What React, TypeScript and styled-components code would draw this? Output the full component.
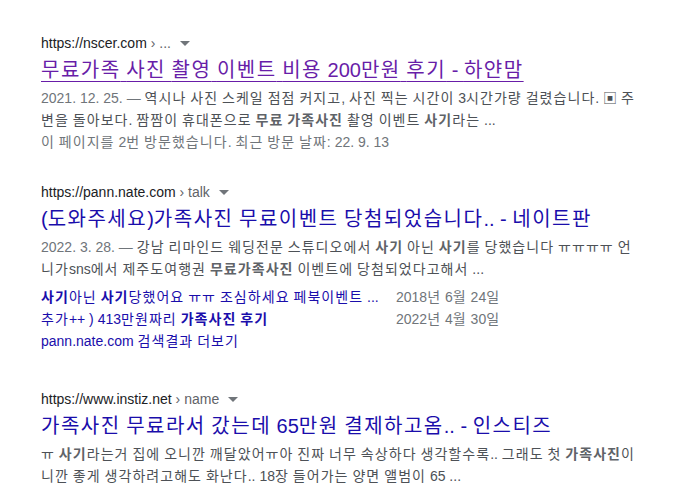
import { Fragment } from "react";
import styled, { createGlobalStyle } from "styled-components";

const GlobalStyle = createGlobalStyle`
  body {
    margin: 0;
    background: #fff;
    font-family: "Liberation Sans", Arial, "Noto Sans CJK KR", sans-serif;
  }
`;

// Hangul in the reference is set a little wider than Noto Sans CJK KR
const Hangul = styled.span`
  letter-spacing: 0.075em;
`;

const hk = (s: string) =>
  s.split(/([가-힣ㄱ-ㅎㅏ-ㅣ]+)/).map((part, i) =>
    /[가-힣ㄱ-ㅎㅏ-ㅣ]/.test(part) ? (
      <Hangul key={i}>{part}</Hangul>
    ) : (
      <Fragment key={i}>{part}</Fragment>
    )
  );

const Page = styled.main`
  padding: 33px 0 0 41px;
  width: 600px;
  display: flex;
  flex-direction: column;
  gap: 29px;
`;

const Result = styled.section<{ $extra?: number }>`
  display: flex;
  flex-direction: column;
  margin-bottom: ${(p) => p.$extra || 0}px;
`;

const UrlLine = styled.div`
  display: flex;
  align-items: center;
  height: 20px;
  font-size: 14px;
  color: #202124;
`;

const Crumb = styled.span`
  color: #5f6368;
  white-space: pre;
`;

const Caret = styled.span`
  margin-left: 9px;
  width: 0;
  height: 0;
  border-left: 5px solid transparent;
  border-right: 5px solid transparent;
  border-top: 5px solid #70757a;
`;

const Title = styled.h3<{ $visited?: boolean }>`
  margin: 4px 0 4px;
  font-size: 20px;
  font-weight: normal;
  line-height: 26px;
  color: ${(p) => (p.$visited ? "#681da8" : "#1a0dab")};
  text-decoration: ${(p) => (p.$visited ? "underline" : "none")};
  text-underline-offset: 4px;
  text-decoration-thickness: 1px;
  white-space: nowrap;
`;

const Snippet = styled.div`
  font-size: 14px;
  line-height: 22px;
  color: #4d5156;
  b {
    color: #5f6368;
  }
`;

const DatePart = styled.span`
  color: #70757a;
`;

const Visited = styled.div`
  font-size: 14px;
  line-height: 22px;
  color: #70757a;
`;

const SiteLinks = styled.div`
  margin-top: 6px;
  display: grid;
  grid-template-columns: 355px auto;
  font-size: 14px;
  line-height: 22px;
`;

const SiteLink = styled.span`
  color: #1a0dab;
  white-space: nowrap;
`;

const SiteDate = styled.span`
  color: #70757a;
`;

const More = styled.div`
  font-size: 14px;
  line-height: 22px;
  color: #1a0dab;
`;

export default function App() {
  return (
    <>
      <GlobalStyle />
      <Page>
        <Result>
          <UrlLine>
            https://nscer.com<Crumb> › ...</Crumb>
            <Caret />
          </UrlLine>
          <Title $visited>{hk("무료가족 사진 촬영 이벤트 비용 200만원 후기 - 하얀맘")}</Title>
          <Snippet>
            <DatePart>2021. 12. 25. — </DatePart>
            {hk("역시나 사진 스케일 점점 커지고, 사진 찍는 시간이 3시간가량 걸렸습니다. ▣ 주변을 돌아보다. 짬짬이 휴대폰으로 ")}
            <b>{hk("무료")}</b> <b>{hk("가족사진")}</b>
            {hk(" 촬영 이벤트 ")}
            <b>{hk("사기")}</b>
            {hk("라는 ...")}
          </Snippet>
          <Visited>{hk("이 페이지를 2번 방문했습니다. 최근 방문 날짜: 22. 9. 13")}</Visited>
        </Result>

        <Result $extra={8}>
          <UrlLine>
            https://pann.nate.com<Crumb> › talk</Crumb>
            <Caret />
          </UrlLine>
          <Title>{hk("(도와주세요)가족사진 무료이벤트 당첨되었습니다.. - 네이트판")}</Title>
          <Snippet>
            <DatePart>2022. 3. 28. — </DatePart>
            {hk("강남 리마인드 웨딩전문 스튜디오에서 ")}
            <b>{hk("사기")}</b>
            {hk(" 아닌 ")}
            <b>{hk("사기")}</b>
            {hk("를 당했습니다 ㅠㅠㅠㅠ 언니가sns에서 제주도여행권 ")}
            <b>{hk("무료가족사진")}</b>
            {hk(" 이벤트에 당첨되었다고해서 ...")}
          </Snippet>
          <SiteLinks>
            <SiteLink>
              <b>{hk("사기")}</b>
              {hk("아닌 ")}
              <b>{hk("사기")}</b>
              {hk("당했어요 ㅠㅠ 조심하세요 페북이벤트 ...")}
            </SiteLink>
            <SiteDate>{hk("2018년 6월 24일")}</SiteDate>
            <SiteLink>
              {hk("추가++ ) 413만원짜리 ")}
              <b>{hk("가족사진 후기")}</b>
            </SiteLink>
            <SiteDate>{hk("2022년 4월 30일")}</SiteDate>
          </SiteLinks>
          <More>{hk("pann.nate.com 검색결과 더보기")}</More>
        </Result>

        <Result>
          <UrlLine>
            https://www.instiz.net<Crumb> › name</Crumb>
            <Caret />
          </UrlLine>
          <Title>{hk("가족사진 무료라서 갔는데 65만원 결제하고옴.. - 인스티즈")}</Title>
          <Snippet>
            {hk("ㅠ ")}
            <b>{hk("사기")}</b>
            {hk("라는거 집에 오니깐 깨달았어ㅠ아 진짜 너무 속상하다 생각할수록.. 그래도 첫 ")}
            <b>{hk("가족사진")}</b>
            {hk("이니깐 좋게 생각하려고해도 화난다.. 18장 들어가는 양면 앨범이 65 ...")}
          </Snippet>
        </Result>
      </Page>
    </>
  );
}
